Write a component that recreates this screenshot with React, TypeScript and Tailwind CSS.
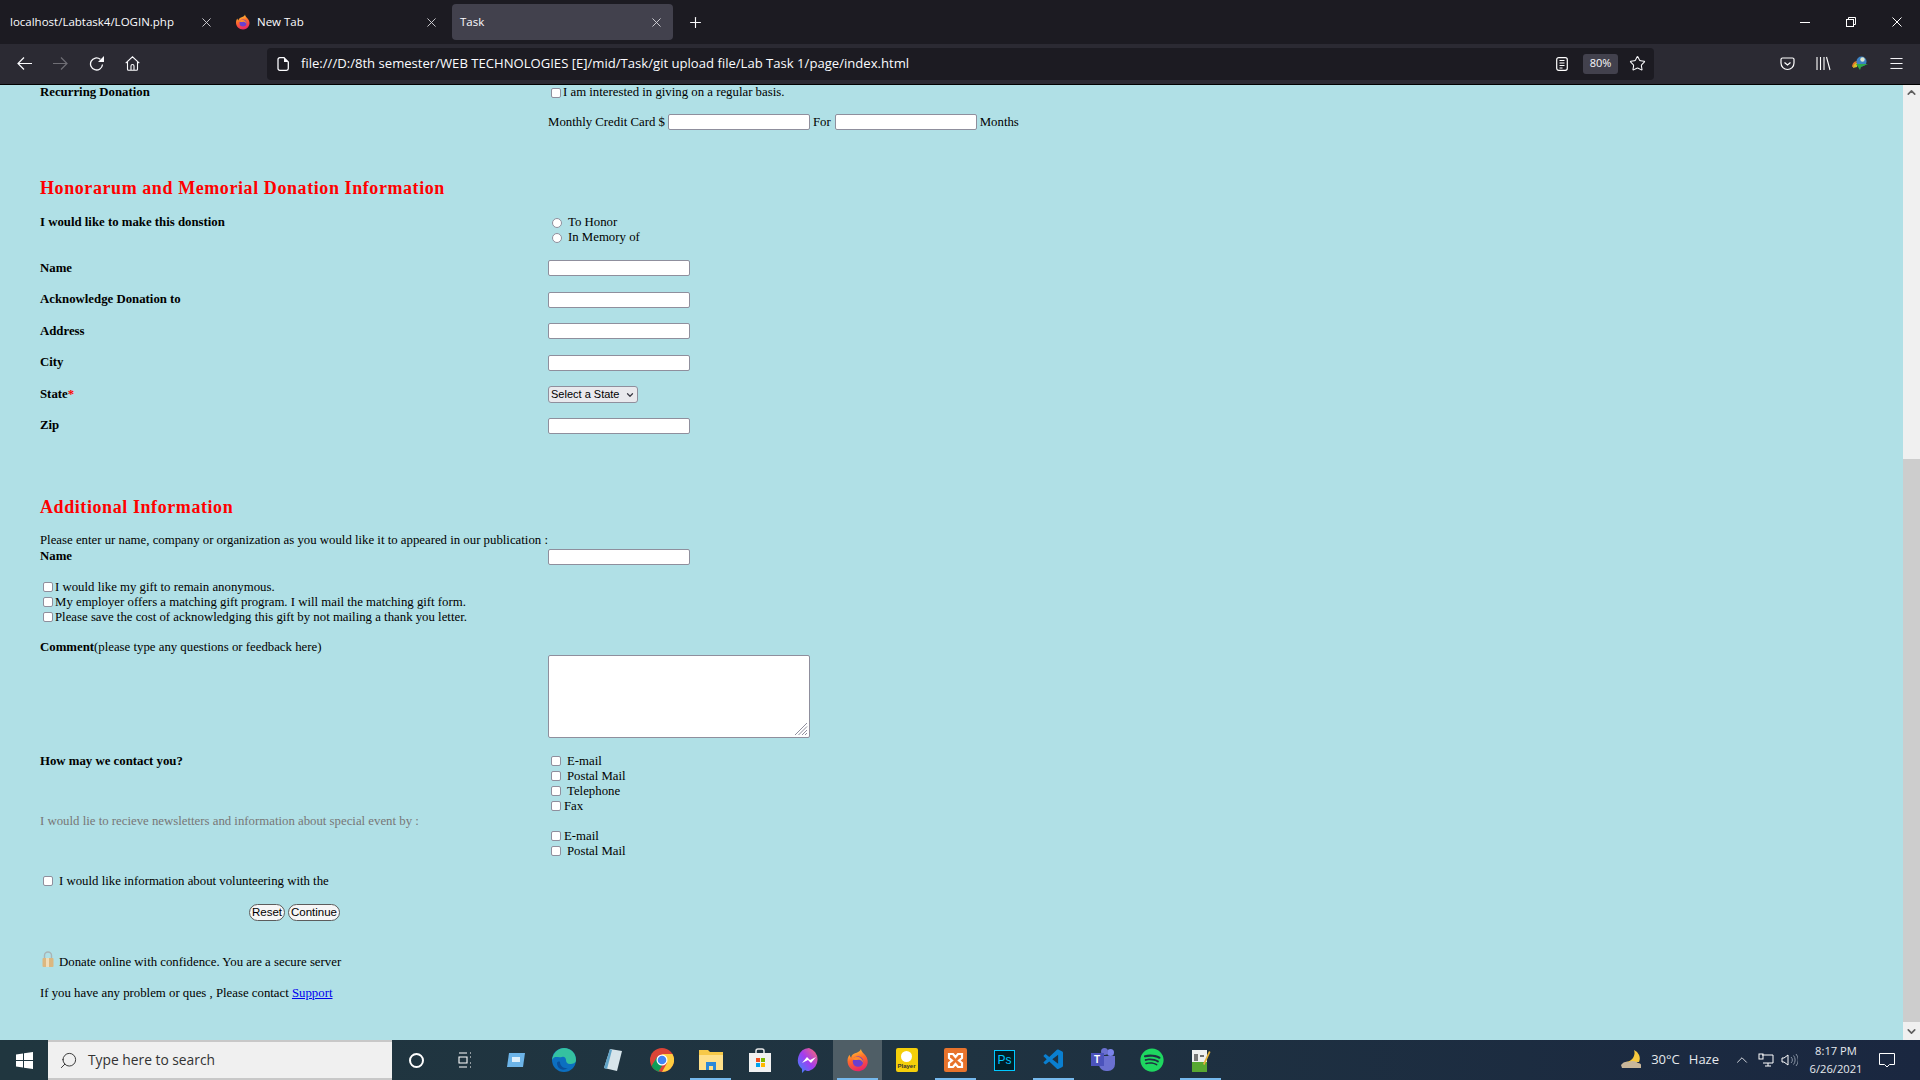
import React from "react";
import { Star, Menu, Plus, ChevronUp, ChevronDown, Search } from "lucide-react";
import { FaSpotify } from "react-icons/fa";
import { VscVscode } from "react-icons/vsc";

function FirefoxIcon({ size = 16, id }: { size?: number; id: string }) {
  return (
    <svg width={size} height={size} viewBox="0 0 32 32">
      <defs>
        <linearGradient id={id} x1="0.3" y1="0" x2="0.6" y2="1">
          <stop offset="0" stopColor="#ffd23a" />
          <stop offset="0.45" stopColor="#ff6a2a" />
          <stop offset="1" stopColor="#e8226b" />
        </linearGradient>
      </defs>
      <path
        d="M20 1c0 4 4 6 6 9 3 4 4 9 2 13-2 5-7 8-12 8C8 31 2 25 2 17c0-3 1-6 3-8 0 2 1 3 2 4 0-3 2-5 5-6 3-1 7-2 8-6z"
        fill={`url(#${id})`}
      />
      <circle cx="16" cy="18" r="7" fill="#6b3fd0" />
      <path d="M8 15c2-3 6-4 9-3 3 1 6 4 6 8-2-4-5-5-8-4-2 0-5 0-7-1z" fill="#ff8a2a" />
    </svg>
  );
}

function CloseGlyph({ size = 9, stroke = "#d8d8dc" }: { size?: number; stroke?: string }) {
  return (
    <svg width={size} height={size} viewBox="0 0 10 10" fill="none" stroke={stroke} strokeWidth="1">
      <path d="M0.5 0.5l9 9M9.5 0.5l-9 9" />
    </svg>
  );
}

function Tab({ title, active, icon }: { title: string; active?: boolean; icon?: boolean }) {
  return (
    <div className={`flex items-center w-[221px] h-9 pl-2 pr-[12px] rounded-[4px] ${active ? "bg-[#42414d]" : ""}`}>
      {icon && (
        <span className="mr-1.5">
          <FirefoxIcon size={16} id="ff-tab" />
        </span>
      )}
      <span className="text-[11.5px] text-[#fbfbfe] flex-1">{title}</span>
      <CloseGlyph />
    </div>
  );
}

function TabBar() {
  return (
    <div className="h-11 bg-[#1c1b22] flex items-center text-white">
      <div className="flex items-center gap-1 ml-[2px]">
        <Tab title="localhost/Labtask4/LOGIN.php" />
        <Tab title="New Tab" icon />
        <Tab title="Task" active />
      </div>
      <Plus size={17} strokeWidth={1.6} className="ml-[14px] text-[#fbfbfe]" />
      <div className="flex-1" />
      <div className="flex items-center gap-[36px] pr-[18px]">
        <span className="w-[10px] h-[1px] bg-white" />
        <svg width="10" height="10" viewBox="0 0 10 10" fill="none" stroke="white" strokeWidth="1">
          <rect x="0.5" y="2.5" width="7" height="7" />
          <path d="M2.5 2.5V0.5h7v7H7.5" />
        </svg>
        <CloseGlyph size={10} stroke="white" />
      </div>
    </div>
  );
}

function Toolbar() {
  return (
    <div className="h-[41px] bg-[#2b2a33] border-b border-b-black flex items-center text-[#fbfbfe] pb-[1px]">
      <div className="w-[267px] flex items-center pl-[6px] shrink-0">
        <div className="w-9 flex justify-center">
          <svg width="15" height="13" viewBox="0 0 15 13" fill="none" stroke="#fbfbfe" strokeWidth="1.2">
            <path d="M15 6.5H1M7 .5l-6 6 6 6" />
          </svg>
        </div>
        <div className="w-9 flex justify-center">
          <svg width="15" height="13" viewBox="0 0 15 13" fill="none" stroke="#6f6e75" strokeWidth="1.2">
            <path d="M0 6.5h14M8 .5l6 6-6 6" />
          </svg>
        </div>
        <div className="w-9 flex justify-center">
          <svg width="15" height="15" viewBox="0 0 15 15" fill="none" stroke="#fbfbfe" strokeWidth="1.3">
            <path d="M13.5 8.5a6 6 0 1 1-2.2-5.2" />
            <path d="M15 0v6h-6z" fill="#fbfbfe" stroke="none" />
          </svg>
        </div>
        <div className="w-9 flex justify-center">
          <svg width="15" height="15" viewBox="0 0 15 15" fill="none" stroke="#fbfbfe" strokeWidth="1.1">
            <path d="M0.7 7.2L7.5 0.8l6.8 6.4M2.5 6v7.2a1 1 0 0 0 1 1h8a1 1 0 0 0 1-1V6M6 14v-4a1.5 1.5 0 0 1 3 0v4" />
          </svg>
        </div>
      </div>
      <div className="w-[1387px] h-8 bg-[#1c1b22] rounded-[4px] flex items-center pl-[10px] pr-[6px]">
        <svg width="12" height="14" viewBox="0 0 12 14" fill="none" stroke="#fbfbfe" strokeWidth="1.3">
          <path d="M1 2.5A1.8 1.8 0 0 1 2.8.7H7L11.3 5v6.5a1.8 1.8 0 0 1-1.8 1.8H2.8A1.8 1.8 0 0 1 1 11.5z" />
          <path d="M7 .7V5h4.3z" fill="#fbfbfe" stroke="none" />
        </svg>
        <span className="ml-[12px] text-[13.1px] flex-1">
          file:///D:/8th semester/WEB TECHNOLOGIES [E]/mid/Task/git upload file/Lab Task 1/page/index.html
        </span>
        <svg width="12" height="14" viewBox="0 0 12 14" fill="none" stroke="white" strokeWidth="1.2" className="mr-[15px]">
          <rect x="0.7" y="0.7" width="10.6" height="12.6" rx="2" />
          <path d="M3.5 3.5h5M3.5 6h5M3.5 8.5h5M3.5 11h3" />
        </svg>
        <span className="w-[35px] h-5 rounded-[3px] bg-[#42414d] text-[11px] flex items-center justify-center">80%</span>
        <Star size={17} strokeWidth={1.5} className="ml-[11px] mr-[2px]" />
      </div>
      <div className="flex-1 flex items-center pl-[126px] gap-[21px]">
        <svg width="15" height="14" viewBox="0 0 15 14" fill="none" stroke="white" strokeWidth="1.2">
          <path d="M1 2.5a1.5 1.5 0 0 1 1.5-1.5h10a1.5 1.5 0 0 1 1.5 1.5V6a6.5 6.5 0 0 1-13 0z" />
          <path d="M4.5 5.5l3 2.5 3-2.5" />
        </svg>
        <svg width="15" height="15" viewBox="0 0 15 15" fill="none" stroke="white" strokeWidth="1.1">
          <path d="M1 1v13M4.5 1v13M8 1v13M10.5 1l3.5 13" />
        </svg>
        <svg width="16" height="15" viewBox="0 0 16 15">
          <path d="M0 11c0-4 3-6 5-6l-1 5z" fill="#e0782a" />
          <path d="M1 12c0-3 2-5 4-5l0 4z" fill="#d8c02a" />
          <circle cx="9.5" cy="5.5" r="5" fill="#3b82c4" />
          <circle cx="10.5" cy="3.5" r="2.2" fill="#e0e8d0" />
          <path d="M4 8h12l-7 3 -1 3z" fill="#2fa84a" />
        </svg>
        <Menu size={17} strokeWidth={1.4} className="ml-[-1px]" />
      </div>
    </div>
  );
}

const inputCls = "block w-[142px] h-4 bg-white border border-[#8f8f9d] rounded-[2px]";

function Check() {
  return <input type="checkbox" className="appearance-none w-[10px] h-[10px] bg-white border border-[#8f8f9d] rounded-[2px] shrink-0" />;
}

function Radio() {
  return <input type="radio" className="appearance-none w-[10px] h-[10px] bg-white border border-[#8f8f9d] rounded-full shrink-0" />;
}

function Row({ label, height, children }: { label: React.ReactNode; height: string; children?: React.ReactNode }) {
  return (
    <div className={`flex items-center ${height}`}>
      <div className="w-[508px] font-bold">{label}</div>
      {children}
    </div>
  );
}

function CheckLine({ label, gap }: { label: string; gap: string }) {
  return (
    <div className="flex items-center h-[15px] pl-[3px]">
      <Check />
      <span className={gap}>{label}</span>
    </div>
  );
}

function Form() {
  return (
    <div className="pl-10 font-['Liberation_Serif',serif] text-[12.8px] leading-[15px] text-black">
      <Row label="Recurring Donation" height="h-[15px]">
        <div className="flex items-center pl-[3px]">
          <Check />
          <span className="ml-[2px]">I am interested in giving on a regular basis.</span>
        </div>
      </Row>
      <div className="flex items-center h-4 mt-[14px] pl-[508px]">
        <span>Monthly Credit Card $</span>
        <input className={`${inputCls} ml-[3px]`} />
        <span className="ml-[3px] mr-[4px]">For</span>
        <input className={inputCls} />
        <span className="ml-[3px]">Months</span>
      </div>

      <h2 className="mt-[47px] text-[18px] tracking-[0.58px] leading-[22px] font-bold text-[#ff0000]">
        Honorarum and Memorial Donation Information
      </h2>

      <div className="flex mt-[16px]">
        <div className="w-[508px] font-bold">I would like to make this donstion</div>
        <div>
          <div className="flex items-center h-[15px] pl-[4px]"><Radio /><span className="ml-[6px]">To Honor</span></div>
          <div className="flex items-center h-[15px] pl-[4px]"><Radio /><span className="ml-[6px]">In Memory of</span></div>
        </div>
      </div>

      <div className="mt-[15px] flex flex-col gap-[15.6px]">
        <Row label="Name" height="h-4"><input className={inputCls} /></Row>
        <Row label="Acknowledge Donation to" height="h-4"><input className={inputCls} /></Row>
        <Row label="Address" height="h-4"><input className={inputCls} /></Row>
        <Row label="City" height="h-4"><input className={inputCls} /></Row>
        <Row label={<>State<span className="text-[#ff0000]">*</span></>} height="h-4">
          <div className="relative w-[90px] h-[17px]">
            <select className="appearance-none w-full h-full bg-[#e9e9ed] border border-[#8f8f9d] rounded-[3px] pl-[2px] font-['Liberation_Sans',sans-serif] text-[11px]">
              <option>Select a State</option>
            </select>
            <ChevronDown size={10} strokeWidth={3} className="absolute right-[3px] top-[4px] text-[#3a3a44]" />
          </div>
        </Row>
        <Row label="Zip" height="h-4"><input className={inputCls} /></Row>
      </div>

      <h2 className="mt-[62px] text-[18px] tracking-[0.58px] leading-[22px] font-bold text-[#ff0000]">Additional Information</h2>

      <div className="mt-[15px]">Please enter ur name, company or organization as you would like it to appeared in our publication :</div>
      <div className="mt-[1px]">
        <Row label="Name" height="h-4"><input className={inputCls} /></Row>
      </div>

      <div className="mt-[15px]">
        <CheckLine label="I would like my gift to remain anonymous." gap="ml-[2px]" />
        <CheckLine label="My employer offers a matching gift program. I will mail the matching gift form." gap="ml-[2px]" />
        <CheckLine label="Please save the cost of acknowledging this gift by not mailing a thank you letter." gap="ml-[2px]" />
      </div>

      <div className="flex mt-[15px]">
        <div className="w-[508px]"><b>Comment</b>(please type any questions or feedback here)</div>
        <div className="relative mt-[15px] w-[262px] h-[83px]">
          <textarea className="block w-full h-full resize-none bg-white border border-[#8f8f9d] rounded-[2px]" />
          <svg width="14" height="14" viewBox="0 0 14 14" className="absolute right-[2px] bottom-[2px]" stroke="#8f8f9d" strokeWidth="1">
            <path d="M1 13L13 1M4.5 13L13 4.5M8 13L13 8M11 13L13 11" />
          </svg>
        </div>
      </div>

      <div className="flex mt-[16px]">
        <div className="w-[508px] font-bold">How may we contact you?</div>
        <div>
          <CheckLine label="E-mail" gap="ml-[6px]" />
          <CheckLine label="Postal Mail" gap="ml-[6px]" />
          <CheckLine label="Telephone" gap="ml-[6px]" />
          <CheckLine label="Fax" gap="ml-[3px]" />
        </div>
      </div>

      <div className="text-[#777]">I would lie to recieve newsletters and information about special event by :</div>

      <div className="pl-[508px]">
        <CheckLine label="E-mail" gap="ml-[3px]" />
        <CheckLine label="Postal Mail" gap="ml-[6px]" />
      </div>

      <div className="flex items-center h-[15px] mt-[15px] pl-[3px]">
        <Check />
        <span className="ml-[6px]">I would like information about volunteering with the</span>
      </div>

      <div className="flex items-center gap-[3px] mt-[15px] pl-[209px] font-['Liberation_Sans',sans-serif] text-[11.5px]">
        <button className="w-9 h-[17px] bg-[#f6f6f6] border border-[#5c5c5c] rounded-full leading-none">Reset</button>
        <button className="w-[52px] h-[17px] bg-[#f6f6f6] border border-[#5c5c5c] rounded-full leading-none">Continue</button>
      </div>

      <div className="flex items-end mt-[30px] pl-[2px]">
        <svg width="12" height="17" viewBox="0 0 12 17" className="mb-[2px]">
          <path d="M2.5 8V4.5a3.5 3.5 0 0 1 7 0V8" fill="none" stroke="#a9b4b6" strokeWidth="1.4" />
          <rect x="0.5" y="7" width="11" height="9" rx="1" fill="#dcb77f" />
          <rect x="4" y="7" width="3" height="9" fill="#f0dcb8" />
        </svg>
        <span className="ml-[5px]">Donate online with confidence. You are a secure server</span>
      </div>

      <div className="mt-[16px]">
        If you have any problem or ques , Please contact <a href="#" className="text-[#0000ee] underline">Support</a>
      </div>
    </div>
  );
}

function Scrollbar() {
  return (
    <div className="w-[17px] bg-[#f0f0f0] flex flex-col items-center shrink-0">
      <div className="h-[17px] flex items-center justify-center mt-[-1px]">
        <ChevronUp size={13} strokeWidth={3} className="text-[#606060]" />
      </div>
      <div className="h-[358px]" />
      <div className="w-full flex-1 bg-[#cdcdcd]" />
      <div className="h-[17px] flex items-center justify-center mt-[1px]">
        <ChevronDown size={13} strokeWidth={3} className="text-[#606060]" />
      </div>
    </div>
  );
}

function TaskIcon({ children, active, running }: { children: React.ReactNode; active?: boolean; running?: boolean }) {
  return (
    <div className={`relative w-[49px] h-10 flex items-center justify-center ${active ? "bg-[#4f5e66]" : ""}`}>
      {children}
      {(running || active) && <span className="absolute bottom-0 left-[4px] right-[4px] h-[2px] bg-[#76b9ed]" />}
    </div>
  );
}

function Taskbar() {
  return (
    <div className="h-10 flex items-center text-white bg-gradient-to-r from-[#20363f] via-[#1f3341] to-[#1a2740]">
      <div className="w-12 flex justify-center">
        <svg width="17" height="17" viewBox="0 0 17 17" fill="white">
          <path d="M0 2.5l7-1v6.5H0zM8 1.3L17 0v8H8zM0 9h7v6.5l-7-1zM8 9h9v8l-9-1.3z" />
        </svg>
      </div>
      <div className="w-[344px] h-10 bg-[#f0f0f0] border-t-2 border-b-2 border-[#c8c8c8] flex items-center pl-[11px] text-[#333] font-['Open_Sans',sans-serif]">
        <Search size={19} strokeWidth={1.2} className="-scale-x-100" />
        <span className="ml-[10px] text-[13.8px]">Type here to search</span>
      </div>
      <div className="w-[49px] flex justify-center ml-[-1px]">
        <span className="w-[15px] h-[15px] rounded-full border-2 border-white ml-[1px]" />
      </div>
      <div className="w-[50px] flex justify-center">
        <svg width="14" height="16" viewBox="0 0 14 16" fill="none" stroke="white" strokeWidth="1.1">
          <path d="M1 1h8M1 15h8M1 5h8v6H1zM12 1h1M12 5h1M12 11h1M12 15h1" />
        </svg>
      </div>
      <TaskIcon>
        <svg width="22" height="16" viewBox="0 0 22 16">
          <path d="M5 1h16l-2 14H3z" fill="#6cb4e8" />
          <rect x="8" y="5" width="8" height="5" fill="#dff0fb" />
        </svg>
      </TaskIcon>
      <TaskIcon>
        <svg width="24" height="24" viewBox="0 0 24 24">
          <circle cx="12" cy="12" r="12" fill="#0c6fc0" />
          <path d="M0 12C1 4 7 0 12 0c7 0 12 5 12 12 0 3-3 4-6 4-3 0-4-2-4-4 0-2-2-4-4-3C5 10 3 7 0 12z" fill="#35c1a0" />
          <path d="M8 14c0 4 4 7 8 6-6 4-11 0-11-5 0-1 2-2 3-1z" fill="#0a4f9a" />
        </svg>
      </TaskIcon>
      <TaskIcon>
        <svg width="20" height="24" viewBox="0 0 20 24">
          <path d="M7 1l12 2-5 20-13-3z" fill="#d7e4ea" />
          <path d="M1 20L7 1l2 1-5 19z" fill="#5fa3c7" />
        </svg>
      </TaskIcon>
      <TaskIcon>
        <svg width="24" height="24" viewBox="0 0 24 24">
          <circle cx="12" cy="12" r="12" fill="#db4437" />
          <path d="M12 24a12 12 0 0 1-10.4-6L7 9l5 9h0l-4 6z" fill="#0f9d58" />
          <path d="M12 6h10.4A12 12 0 0 1 12 24l5-9z" fill="#ffcd40" />
          <circle cx="12" cy="12" r="5.5" fill="white" />
          <circle cx="12" cy="12" r="4.3" fill="#4285f4" />
        </svg>
      </TaskIcon>
      <TaskIcon running>
        <svg width="24" height="20" viewBox="0 0 24 20">
          <path d="M0 0h9l2 2h13v18H0z" fill="#f7c948" />
          <path d="M0 5h24v15H0z" fill="#ffe08a" />
          <path d="M7 12h10v8h-3v-4h-4v4H7z" fill="#2b88d8" />
        </svg>
      </TaskIcon>
      <TaskIcon>
        <svg width="22" height="24" viewBox="0 0 22 24">
          <path d="M7 6V3a2 2 0 0 1 2-2h4a2 2 0 0 1 2 2v3" fill="none" stroke="#e8e8e8" strokeWidth="1.5" />
          <rect x="0" y="5" width="22" height="19" fill="#f2f2f2" />
          <rect x="7" y="10" width="4" height="4" fill="#f25022" />
          <rect x="12" y="10" width="4" height="4" fill="#7fba00" />
          <rect x="7" y="15" width="4" height="4" fill="#00a4ef" />
          <rect x="12" y="15" width="4" height="4" fill="#ffb900" />
        </svg>
      </TaskIcon>
      <TaskIcon>
        <svg width="24" height="25" viewBox="0 0 24 25">
          <defs>
            <linearGradient id="ms" x1="0" y1="1" x2="1" y2="0">
              <stop offset="0" stopColor="#2f8cff" />
              <stop offset="0.5" stopColor="#a33cf0" />
              <stop offset="1" stopColor="#ff6a6a" />
            </linearGradient>
          </defs>
          <path d="M12 0a12 12 0 0 1 0 23c-1 0-3 0-4-1l-3 3v-4A12 12 0 0 1 12 0z" fill="url(#ms)" />
          <path d="M5 15l5-6 3 3 6-3-5 6-3-3z" fill="white" />
        </svg>
      </TaskIcon>
      <TaskIcon active>
        <FirefoxIcon size={24} id="ff-task" />
      </TaskIcon>
      <TaskIcon>
        <div className="w-[22px] h-[24px] bg-[#f5cf0a] rounded-[2px] flex flex-col items-center justify-center">
          <span className="w-[11px] h-[11px] rounded-full bg-white" />
          <span className="text-[6px] leading-[8px] font-bold text-[#333] font-['Liberation_Sans',sans-serif]">Player</span>
        </div>
      </TaskIcon>
      <TaskIcon running>
        <div className="w-[23px] h-[24px] bg-[#e8732c] rounded-[2px] flex items-center justify-center">
          <svg width="17" height="17" viewBox="0 0 17 17" fill="none" stroke="white" strokeWidth="2.2">
            <path d="M2 2h4l2.5 3L11 2h4v4l-3 2.5 3 2.5v4h-4l-2.5-3L6 15H2v-4l3-2.5L2 6z" />
          </svg>
        </div>
      </TaskIcon>
      <TaskIcon>
        <div className="w-[21px] h-[21px] bg-[#001d26] border border-[#00c8ff] flex items-center justify-center text-[#00c8ff] text-[12px] font-['Liberation_Sans',sans-serif]">Ps</div>
      </TaskIcon>
      <TaskIcon running>
        <VscVscode size={24} className="text-[#0a7fd0]" />
      </TaskIcon>
      <TaskIcon>
        <div className="relative w-6 h-6">
          <span className="absolute right-[1px] top-[1px] w-[7px] h-[7px] rounded-full bg-[#7b83eb]" />
          <span className="absolute left-[10px] top-[0px] w-[7px] h-[7px] rounded-full bg-[#6a70d0]" />
          <span className="absolute left-[8px] top-[8px] w-[16px] h-[15px] rounded-b-[7px] bg-[#6a70d0]" />
          <span className="absolute left-0 top-[5px] w-[13px] h-[13px] bg-[#4b53bc] text-white text-[10px] leading-[13px] text-center font-bold font-['Liberation_Sans',sans-serif]">T</span>
        </div>
      </TaskIcon>
      <TaskIcon>
        <FaSpotify size={24} className="text-[#1ed760]" />
      </TaskIcon>
      <TaskIcon running>
        <svg width="20" height="25" viewBox="0 0 20 25">
          <rect x="1" y="2" width="15" height="22" fill="#f0f0f0" />
          <rect x="1" y="14" width="15" height="10" fill="#58a832" />
          <path d="M4 6v7M6 6v7M9 8h4" stroke="#444" strokeWidth="1.4" />
          <path d="M12 16l6-13 1.5 1-6 13z" fill="#e5b23c" />
        </svg>
      </TaskIcon>
      <div className="flex-1" />
      <div className="flex items-center font-['Open_Sans',sans-serif] text-[#e6e9ee]">
        <svg width="21" height="20" viewBox="0 0 21 20">
          <path d="M13 0a9 9 0 0 1 5 12H5A9 9 0 0 0 13 0z" fill="#f6c93f" />
          <path d="M0 15c2-3 5-4 8-3 3-2 7-1 9 1 2 0 3 1 3 2v3H1z" fill="#c9b79a" />
        </svg>
        <span className="ml-[9px] text-[13px]">30°C</span>
        <span className="ml-[9px] text-[13px]">Haze</span>
        <ChevronUp size={18} strokeWidth={1.2} className="ml-[14px]" />
        <svg width="16" height="14" viewBox="0 0 16 14" fill="none" stroke="white" strokeWidth="1" className="ml-[7px]">
          <path d="M4 2h11v8H5M10 10v3M7 13h6" />
          <rect x="1" y="1" width="4" height="5" />
        </svg>
        <svg width="17" height="14" viewBox="0 0 17 14" fill="none" stroke="white" strokeWidth="1" className="ml-[7px]">
          <path d="M1 5h2l4-3v10L3 9H1z" />
          <path d="M10 4a4 4 0 0 1 0 6M12.5 2.5a7 7 0 0 1 0 9M15 1a9 9 0 0 1 0 12" stroke="#8a95a5" />
        </svg>
        <div className="w-[68px] ml-[4px] text-center text-[11.2px] leading-[18px]">
          <div>8:17 PM</div>
          <div>6/26/2021</div>
        </div>
        <svg width="16" height="15" viewBox="0 0 16 15" fill="none" stroke="white" strokeWidth="1" className="ml-[9px] mr-[25px]">
          <path d="M0.5 0.5h15v11h-5l-2.5 2.5-2.5-2.5h-5z" />
        </svg>
      </div>
    </div>
  );
}

export default function App() {
  return (
    <div className="w-[1920px] h-[1080px] overflow-hidden flex flex-col font-['Open_Sans',sans-serif]">
      <TabBar />
      <Toolbar />
      <div className="flex-1 min-h-0 flex bg-[#b0e0e6]">
        <div className="flex-1 overflow-hidden">
          <Form />
        </div>
        <Scrollbar />
      </div>
      <Taskbar />
    </div>
  );
}
